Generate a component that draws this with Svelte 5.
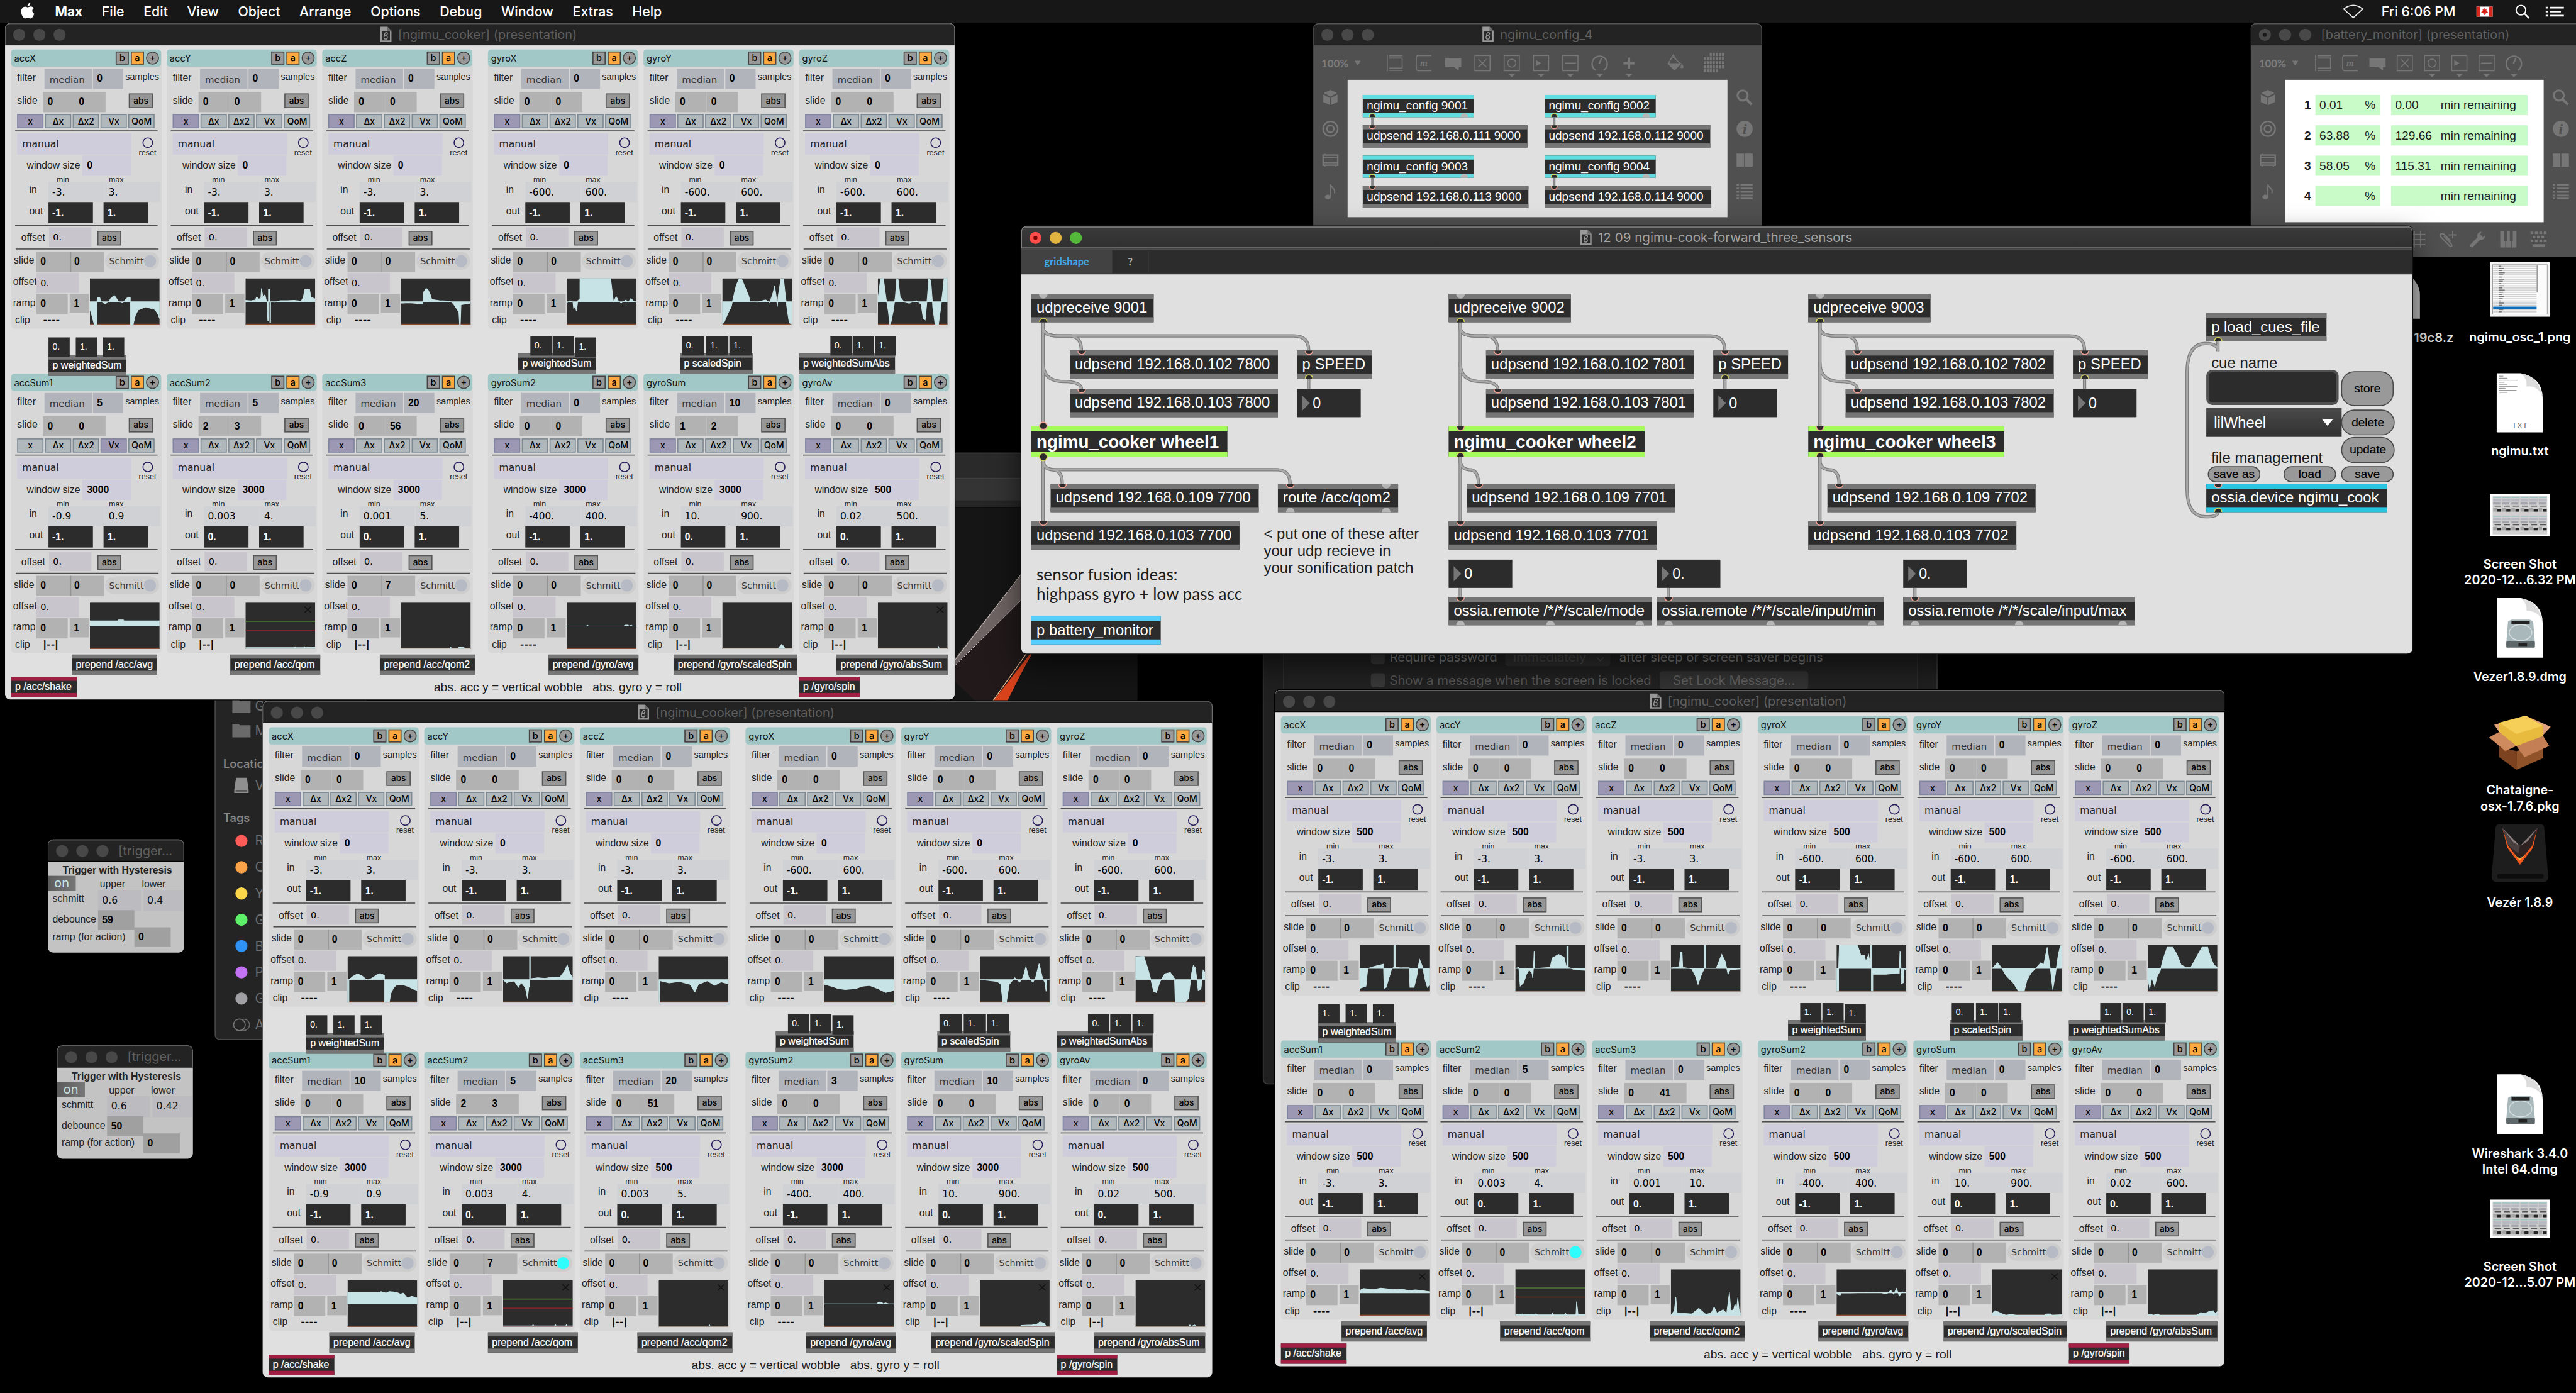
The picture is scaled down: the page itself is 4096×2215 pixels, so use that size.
<script>
  const names = ['accX', 'accY', 'accZ', 'gyroX', 'gyroY', 'gyroZ', 'accSum1', 'accSum2', 'accSum3', 'gyroSum2', 'gyroSum', 'gyroAv'];
  const tabNames = ['x', 'Δx', 'Δx2', 'Vx', 'QoM'];

  // One module per row: filter, slideA, slideB, window size, in min, in max, out min, smoothing, clip, graph
  function build(rows) {
    return rows.map((r, i) => ({
      name: names[i], filter: r[0], sa: r[1], sb: r[2], win: r[3], lo: r[4], hi: r[5], out: r[6], s2: r[7], clip: r[8],
      graph: r[9], uni: !!r[10]?.uni, thr: !!r[10]?.thr, mark: !!r[10]?.mark, lit: !!r[10]?.lit, tab: r[10]?.tab ?? 0
    }));
  }

  const C = '----', B = '|--|';
  const flatLine = '0,0 28,0 30,3 31,0 82,0 84,4 88,4 89,0 93,3 94,0 100,0';

  const cookers = [
    {
      x: 10, y: 46, sums: [['0.', '1.', '1.'], ['0.', '1.', '1.'], ['0.', '1.', '1.'], ['0.', '1.', '1.']],
      mods: build([
        [0, 0, 0, 0, '-3.', '3.', '-1.', 0, C, '0,-30 3,-60 6,-95 10,-97 10,0 11,20 14,20 16,0 22,-8 27,0 30,15 35,27 38,15 41,0 47,-5 51,10 55,20 58,18 58,-97 62,-97 65,-60 69,-35 75,-28 80,-22 87,-28 92,-30 95,-40 98,-55 100,-72'],
        [0, 0, 0, 0, '-3.', '3.', '-1.', 0, C, '0,6 8,4 14,8 16,20 19,12 22,15 23,57 25,20 28,30 30,5 31,0 32,-80 33,-80 33,52 35,52 35,-87 36,-87 36,0 42,-2 50,5 60,5 70,6 80,3 83,20 85,52 92,52 94,20 100,12'],
        [0, 0, 0, 0, '-3.', '3.', '-1.', 0, C, '0,-6 10,-4 20,-6 31,-10 32,40 36,57 39,50 42,30 44,10 55,5 70,3 75,-8 80,-30 83,-45 84,-97 85,-97 86,-12 92,-10 98,-8 100,0'],
        [0, 0, 0, 0, '-600.', '600.', '-1.', 0, C, '0,-5 5,5 9,-3 10,-30 12,-15 14,-40 16,5 19,12 19,100 63,100 65,50 67,0 71,22 74,5 78,-6 85,8 88,-4 92,14 97,0 100,-3'],
        [0, 0, 0, 0, '-600.', '600.', '-1.', 0, C, '0,-95 3,-85 8,-50 13,-20 16,20 20,70 24,97 28,97 33,60 38,25 40,0 50,-2 62,8 68,-4 73,40 75,68 77,30 79,-20 80,20 84,97 88,97 90,40 93,-30 96,-90 100,-95'],
        [0, 0, 0, 0, '-600.', '600.', '-1.', 0, C, '0,10 4,100 8,100 12,10 15,-40 17,-97 19,-85 22,-40 25,20 27,97 29,97 32,20 38,-2 45,-6 55,5 62,-10 65,-70 68,-77 71,20 73,100 76,90 79,-30 82,-95 87,-95 90,-30 93,40 95,100 100,100'],
        [5, 0, 0, 3000, '-0.9', '0.9', '-1.', 0, B, '0,22 40,22 41,26 48,26 49,22 100,22', { tab: 3 }],
        [5, 2, 3, 3000, '0.003', '4.', '0.', 0, B, '0,2 70,2 71,4 72,2 84,2 85,4 86,2 100,3', { uni: true, thr: true, mark: true }],
        [20, 0, 56, 3000, '0.001', '5.', '0.', 7, B, '0,0 70,0 71,3 73,0 82,0 83,3 90,3 91,0 100,0', { uni: true }],
        [0, 0, 0, 3000, '-400.', '400.', '-1.', 0, C, flatLine],
        [10, 1, 2, 3000, '10.', '900.', '0.', 0, B, '0,0 80,0 82,4 85,9 88,5 90,0 100,0', { uni: true }],
        [0, 0, 0, 500, '0.02', '500.', '0.', 0, B, '0,0 86,0 87,4 88,0 100,0', { uni: true, mark: true }]
      ])
    },
    {
      x: 520, y: 1388, sums: [['0.', '1.', '1.'], ['0.', '1.', '1.'], ['0.', '1.', '1.'], ['0.', '1.', '1.']],
      mods: build([
        [0, 0, 0, 0, '-3.', '3.', '-1.', 0, C, '0,-97 2,-97 2,0 8,14 14,24 20,18 26,3 30,-2 36,8 42,20 47,26 53,18 53,-97 60,-97 62,-60 66,-35 71,-20 80,-22 88,-30 94,-40 100,-46'],
        [0, 0, 0, 0, '-3.', '3.', '-1.', 0, C, '0,0 5,-14 10,-8 16,-6 22,-32 26,-12 32,-35 35,-80 37,-30 38,-30 38,100 39,100 39,4 50,8 60,5 70,10 82,12 88,35 92,62 96,25 100,8'],
        [0, 0, 0, 0, '-3.', '3.', '-1.', 0, C, '0,-97 1,-97 2,-5 15,-14 30,-8 45,-20 52,-52 57,-20 70,-5 80,-25 90,-10 100,-18'],
        [0, 0, 0, 0, '-600.', '600.', '-1.', 0, C, '0,-20 10,-28 20,-38 30,-42 45,-38 55,-28 65,-25 78,-40 88,-55 95,-50 100,-45'],
        [0, 0, 0, 0, '-600.', '600.', '-1.', 0, C, '0,0 10,-3 25,-8 30,-20 33,-97 38,-97 42,-20 50,8 57,-10 62,10 66,55 70,10 76,-12 80,10 85,68 90,5 93,-10 95,-50 96,0 100,0'],
        [0, 0, 0, 0, '-600.', '600.', '-1.', 0, C, '0,97 12,100 18,45 22,0 26,-50 30,-55 35,-10 42,25 50,30 56,5 57,-97 72,-95 76,-80 80,20 83,60 86,50 90,-45 94,-40 97,40 100,30'],
        [10, 0, 0, 3000, '-0.9', '0.9', '-1.', 0, C, '0,48 45,48 48,52 55,46 60,52 70,50 76,42 80,46 86,25 92,32 100,25'],
        [5, 2, 3, 3000, '0.003', '4.', '0.', 7, B, '0,1 42,1 43,4 44,1 74,1 75,4 76,1 90,1 91,4 92,1 100,1', { uni: true, thr: true, mark: true, lit: true }],
        [20, 0, 51, 500, '0.003', '5.', '0.', 0, B, '0,0 72,0 73,3 74,0 100,0', { uni: true, mark: true }],
        [3, 0, 0, 3000, '-400.', '400.', '-1.', 0, C, '0,0 76,0 77,6 83,6 84,0 88,4 92,0 100,0', { mark: true }],
        [10, 0, 0, 3000, '10.', '900.', '0.', 0, B, '0,0 58,0 60,2 75,3 82,5 86,10 92,7 95,0 100,0', { uni: true, mark: true }],
        [0, 0, 0, 500, '0.02', '500.', '0.', 0, B, '0,0 77,0 78,3 80,0 85,3 87,0 100,0', { uni: true, mark: true }]
      ])
    },
    {
      x: 2524, y: 1366, sums: [['1.', '1.', '1.'], ['1.', '1.', '1.'], ['0.', '1.', '1.'], ['1.', '0.', '1.']],
      mods: build([
        [0, 0, 0, 500, '-3.', '3.', '-1.', 0, C, '0,-85 9,-75 11,-15 12,0 20,8 34,18 35,-85 38,-80 42,-40 46,0 49,5 49,100 51,100 51,5 60,3 71,3 72,-80 78,-80 82,-30 84,10 86,38 90,8 94,-50 97,-80 100,-70'],
        [0, 0, 0, 500, '-3.', '3.', '-1.', 0, C, '0,0 5,5 7,-75 12,-60 16,-25 20,-5 24,-20 25,-40 26,0 27,75 28,0 50,5 53,45 62,60 70,48 73,10 74,0 74,95 76,95 76,5 85,-5 100,-8'],
        [0, 0, 0, 500, '-3.', '3.', '-1.', 0, C, '0,2 12,8 14,70 16,70 17,5 30,-2 35,-30 39,-68 44,-25 48,0 48,100 50,100 50,0 65,0 73,60 78,30 82,-25 85,-5 100,-2'],
        [0, 0, 0, 500, '-600.', '600.', '-1.', 0, C, '0,-97 3,-97 3,0 4,100 30,100 35,55 40,55 42,30 46,60 49,5 49,100 50,100 50,-97 52,-97 52,-25 70,-25 90,-20 91,75 92,60 93,-65 96,-60 97,0 100,-10'],
        [0, 0, 0, 500, '-600.', '600.', '-1.', 0, C, '0,0 8,25 14,0 20,-30 30,-60 38,-97 46,-97 50,-50 56,-18 64,5 70,25 74,15 79,90 84,-10 87,-90 91,-20 95,60 98,97 100,97'],
        [0, 0, 0, 500, '-600.', '600.', '-1.', 0, C, '0,-40 3,-85 6,-40 10,-75 14,-30 18,-10 22,40 28,90 36,90 42,60 48,15 55,5 62,5 70,50 78,90 86,90 90,50 95,15 100,5'],
        [0, 0, 0, 500, '-3.', '3.', '-1.', 0, C, '0,10 5,18 20,14 30,20 50,14 60,16 70,10 80,12 90,9 100,4', { mark: true }],
        [5, 0, 0, 500, '0.003', '4.', '0.', 0, B, '0,1 10,3 12,1 30,3 32,1 52,1 53,5 55,1 70,1 72,4 74,1 87,1 88,30 90,2 100,2', { uni: true, thr: true, lit: true }],
        [0, 0, 41, 500, '0.001', '10.', '0.', 0, B, '0,0 5,10 7,40 9,5 30,3 36,10 40,15 50,2 58,5 62,18 66,5 75,12 80,4 84,50 86,10 90,12 92,25 94,10 96,38 98,10 100,5', { uni: true }],
        [0, 0, 0, 500, '-400.', '400.', '-1.', 0, C, '0,-4 5,-10 7,0 20,-1 60,2 72,-4 78,10 82,-6 86,18 90,-14 94,4 100,0'],
        [0, 0, 0, 500, '10.', '900.', '0.', 0, B, '0,4 4,10 9,7 15,3 20,0 28,2 34,0 75,0 78,3 84,3 86,0 100,1', { uni: true, mark: true }],
        [0, 0, 0, 500, '0.02', '600.', '0.', 0, B, '0,0 4,3 8,0 14,3 18,0 70,0 76,6 82,4 88,8 94,10 97,4 100,8', { uni: true }]
      ])
    }
  ];

  const sumNames = ['p weightedSum', 'p weightedSum', 'p scaledSpin', 'p weightedSumAbs'];
  const sumPos = [
    { x: 86, y: 658, w: 154, n: [[86, 622, 42], [140, 622, 42], [194, 622, 42]] },
    { x: 1016, y: 654, w: 154, n: [[1040, 620, 42], [1084, 620, 42], [1128, 622, 42]] },
    { x: 1336, y: 654, w: 144, n: [[1340, 620, 44], [1388, 620, 44], [1434, 620, 44]] },
    { x: 1572, y: 654, w: 190, n: [[1634, 620, 42], [1678, 620, 42], [1722, 620, 42]] }
  ];
  const prepends = [
    [132, 169, 'prepend /acc/avg'], [446, 178, 'prepend /acc/qom'], [742, 188, 'prepend /acc/qom2'],
    [1076, 178, 'prepend /gyro/avg'], [1324, 244, 'prepend /gyro/scaledSpin'], [1646, 220, 'prepend /gyro/absSum']
  ];

  function points(m) {
    const base = m.uni ? 91 : 46.5;
    const span = m.uni ? 0.91 : 0.465;
    const pts = m.graph.split(' ').map((p) => {
      const [x, v] = p.split(',').map(Number);
      return `${(x * 1.38).toFixed(1)},${(base - v * span).toFixed(1)}`;
    });
    return `0,${base} ${pts.join(' ')} 138,${base}`;
  }

  // Main patcher
  const I = 'in', O = 'out', F = 'free';
  const objects = [];
  const numbers = [];
  const cables = [];
  [[20, 76, 38, '1', '00'], [846, 74, 36, '2', '01'], [1558, 74, 38, '3', '02']].forEach(([x, d, e, n, p]) => {
    const c = x + 23;
    objects.push(
      { x, y: 134, w: 242, t: `udpreceive 900${n}`, p: [[F, 23, 0], [O, 23, 1]] },
      { x: x + d, y: 246, w: 412, t: `udpsend 192.168.0.102 78${p}`, p: [[I, 23, 0]] },
      { x: x + d, y: 322, w: 412, t: `udpsend 192.168.0.103 78${p}`, p: [[I, 23, 0]] },
      { x: x + d + 450, y: 246, w: 148, t: 'p SPEED', p: [[I, 23, 0], [O, 23, 1]] },
      { x, y: 396, w: 388, h: 60, t: `ngimu_cooker wheel${n}`, c: n === '1' ? 'lime hover' : 'lime', p: [[I, 23, 0], [O, 23, 1]] },
      { x: x + e, y: 510, w: 412, t: `udpsend 192.168.0.109 77${p}`, p: [[I, 23, 0]] },
      { x, y: 584, w: 412, t: `udpsend 192.168.0.103 77${p}`, p: [[I, 23, 0]] }
    );
    numbers.push({ x: x + d + 450, y: 322, t: '0' });
    cables.push(
      `M${c} 190V396`, `M${c} 456V584`,
      `M${c} 190V200Q${c} 217 ${c + 30} 217H${c + d - 22}Q${c + d} 219 ${c + d} 246`,
      `M${c} 190V200Q${c} 217 ${c + 30} 217H${c + d + 420}Q${c + d + 450} 217 ${c + d + 450} 246`,
      `M${c} 270Q${c} 304 ${c + 34} 307Q${c + d} 307 ${c + d} 322`,
      `M${c + d + 450} 302V322`,
      `M${c} 456V464Q${c} 480 ${c + 18} 482Q${c + e} 482 ${c + e} 510`
    );
  });
  cables.push(
    'M43 456V464Q43 482 68 482H505Q532 482 532 510',
    'M869 716V734', 'M1281 716V734', 'M1769 716V734',
    'M2369 228V247',
    'M2369 566Q2369 575 2345 575Q2308 575 2308 520V290Q2308 232 2345 232Q2369 232 2369 247'
  );
  objects.push(
    { x: 508, y: 510, w: 238, t: 'route /acc/qom2', p: [[I, 24, 0], [F, 214, 0], [F, 24, 1], [F, 214, 1]] },
    { x: 20, y: 772, w: 256, t: 'p battery_monitor', c: 'sky', p: [] },
    { x: 846, y: 734, w: 402, t: 'ossia.remote /*/*/scale/mode', p: [[I, 23, 0], [F, 23, 1], [F, 201, 1], [F, 378, 1]] },
    { x: 1258, y: 734, w: 450, t: 'ossia.remote /*/*/scale/input/min', p: [[I, 23, 0], [F, 23, 1], [F, 225, 1], [F, 426, 1]] },
    { x: 1746, y: 734, w: 458, t: 'ossia.remote /*/*/scale/input/max', p: [[I, 23, 0], [F, 23, 1], [F, 229, 1], [F, 434, 1]] },
    { x: 2346, y: 172, w: 238, t: 'p load_cues_file', p: [[O, 23, 1]] },
    { x: 2346, y: 510, w: 358, t: 'ossia.device ngimu_cook', c: 'aqua', p: [[I, 23, 0], [O, 23, 1]] }
  );
  numbers.push({ x: 846, y: 660, t: '0' }, { x: 1258, y: 660, t: '0.' }, { x: 1746, y: 660, t: '0.' });
  const pills = [
    [2613, 287, 104, 69, 'store'], [2613, 363, 106, 51, 'delete'], [2613, 417, 106, 52, 'update'],
    [2349, 475, 104, 32, 'save as'], [2499, 475, 104, 32, 'load'], [2613, 475, 104, 32, 'save']
  ];

  const configs = [[30, 30, 1, 326], [390, 30, 2, 328], [30, 150, 3, 328], [390, 150, 4, 330]];
  const battery = [[1, '0.01', '0.00'], [2, '63.88', '129.66'], [3, '58.05', '115.31'], [4, '', '']];
  const menus = ['File', 'Edit', 'View', 'Object', 'Arrange', 'Options', 'Debug', 'Window', 'Extras', 'Help'];
  const tags = [['#ff5b58', 'R'], ['#fba349', 'C'], ['#fbd648', 'Y'], ['#5cf169', 'G'], ['#2f93f6', 'B'], ['#c573f5', 'P'], ['#a0a0a5', 'G']];
  const triggers = [{ x: 95, y: 1662, lo: '0.4', deb: '59' }, { x: 113, y: 2070, lo: '0.42', deb: '50' }];

  const desktop = [
    { y: 519, kind: 'list', h: 108, ty: 24, t: ['ngimu_osc_1.png'] },
    { y: 739, kind: 'txt', h: 117, ty: 20, t: ['ngimu.txt'] },
    { y: 978, kind: 'shot', h: 84, ty: 38, t: ['Screen Shot', '2020-12...6.32 PM'] },
    { y: 1184, kind: 'dmg', h: 118, ty: 22, t: ['Vezer1.8.9.dmg'] },
    { y: 1417, kind: 'box', h: 108, ty: 23, t: ['Chataigne-', 'osx-1.7.6.pkg'] },
    { y: 1632, kind: 'vezer', h: 114, ty: 25, t: ['Vezér 1.8.9'] },
    { y: 2127, kind: 'dmg', h: 119, ty: 21, t: ['Wireshark 3.4.0', 'Intel 64.dmg'] },
    { y: 2375, kind: 'shot', h: 76, ty: 40, t: ['Screen Shot', '2020-12...5.07 PM'] }
  ];
</script>

{#snippet lights(dot)}
  <span class="lights"><i class:dot></i><i></i><i></i></span>
{/snippet}

{#snippet docIcon()}
  <svg class="doc" viewBox="0 0 22 30"><path d="M0 0H14L22 8V30H0Z" fill="#9a9a9a" /><path d="M14 0L22 8H14Z" fill="#6a6a6a" /><rect x="3" y="9" width="16" height="18" fill="#2a2a2a" /><circle cx="10.5" cy="21" r="3.4" fill="none" stroke="#9a9a9a" stroke-width="1.7" /><path d="M8 18C8 13 10 11 13 11.500C15 12 14.500 15 12 15.500" fill="none" stroke="#9a9a9a" stroke-width="1.7" /></svg>
{/snippet}

{#snippet toolIcon(k)}
  <svg class="ico" viewBox="0 0 32 32" fill="none" stroke="#767676" stroke-width="2">
    {#if k === 'obj'}<path d="M1.500 0V32M5 1.500H32M5 6H32M5 26H32M5 30.500H32M31 6V26" />
    {:else if k === 'msg'}<path d="M31 1H5Q1 1 1 6V26Q1 31 5 31H31" /><text x="16" y="22" text-anchor="middle" class="mm">m</text>
    {:else if k === 'com'}<path d="M0 6H32V24H27V31L18 24H0Z" fill="#767676" stroke="none" />
    {:else if k === 'tog'}<rect x="1" y="1" width="30" height="30" /><path d="M8 8L24 24M24 8L8 24" />
    {:else if k === 'bang'}<rect x="1" y="1" width="30" height="30" /><circle cx="16" cy="16" r="8" />
    {:else if k === 'num'}<rect x="1" y="1" width="30" height="30" /><path d="M6 10L16 16L6 22Z" fill="#767676" stroke="none" />
    {:else if k === 'sli'}<rect x="1" y="1" width="30" height="30" /><path d="M5 16H27" />
    {:else if k === 'dial'}<path d="M8 30A15 15 0 1 1 24 30" stroke-width="3" /><path d="M15 17L20 6" stroke-width="3" />
    {:else if k === 'plus'}<path d="M16 5V27M5 16H27" stroke-width="5" />
    {:else if k === 'fill'}<path d="M10 3L26 17L14 29L2 17Z" /><path d="M2 17H26L14 29Z" fill="#767676" /><path d="M7 8L12 0L17 8" /><path d="M29 17Q35 26 29 26Q23 26 29 17Z" fill="#767676" stroke="none" />
    {:else if k === 'grid'}{#each [0, 1, 2, 3, 4] as r}<path d="M{r === 0 ? 8 : -4} {r * 8 - 1}H{r === 4 ? 26 : 36}" stroke-width="6" stroke-dasharray="4 2" />{/each}
    {:else if k === 'cube'}<path d="M16 1L29 7L16 14L3 7Z M2 10L15 17V31L2 25Z M30 10L17 17V31L30 25Z" fill="#767676" stroke="none" />
    {:else if k === 'ring'}<circle cx="16" cy="16" r="14.500" stroke-width="3" /><circle cx="16" cy="16" r="7" stroke-width="3" />
    {:else if k === 'amp'}<rect x="1.500" y="6" width="29" height="20" stroke-width="3" /><path d="M2 11H30M2 21H30M5 26V29M27 26V29M5 6V3" />
    {:else if k === 'note'}<path d="M16 2V26M16 2C17 10 27 9 24 20" stroke-width="2.500" /><ellipse cx="11" cy="27" rx="6" ry="4.500" fill="#767676" stroke="none" />
    {:else if k === 'find'}<circle cx="12" cy="12" r="10" stroke-width="4" /><path d="M19 19L30 30" stroke-width="5" />
    {:else if k === 'info'}<circle cx="16" cy="16" r="16" fill="#767676" stroke="none" /><text x="16" y="26" text-anchor="middle" class="ii">i</text>
    {:else if k === 'book'}<path d="M0 3H15V29H0ZM17 3H32V29H17Z" fill="#767676" stroke="none" />
    {:else if k === 'list'}<path d="M0 3H5M8 3H32M0 10H5M8 10H32M0 17H5M8 17H32M0 24H5M8 24H32M0 30H5M8 30H32" stroke-width="3.500" />
    {:else if k === 'hash'}<path d="M10 0V32M22 0V32M0 6H32M0 16H32M0 26H32" />
    {:else if k === 'clip'}<path d="M8 9L23 25Q26 30 21 30L3 12Q-1 6 4 5Q8 4 11 8L22 20M26 0V14M18 7H33" stroke-width="2.500" />
    {:else if k === 'wrench'}<path d="M4 28L21 11" stroke-width="7" stroke-linecap="round" /><path d="M30 8A8 8 0 1 1 23 1L20 7L25 12Z" fill="#767676" stroke="none" />
    {:else if k === 'piano'}<path d="M0 0H7V20H10V32H0ZM13 0H19V20H22V32H11V20H13ZM25 0H32V32H23V20H25Z" fill="#767676" stroke="none" />
    {:else if k === 'keys'}<path d="M0 3H32M4 11H29M0 19H32" stroke-width="5" stroke-dasharray="5.500 3.200" /><path d="M4 28H29" stroke-width="5" />{/if}
  </svg>
{/snippet}

{#snippet module(m)}
  <section class="mod">
    <header><b>{m.name}</b><span class="sq">b</span><span class="sq on">a</span><span class="sq round">+</span></header>
    <div class="row r-filter">
      <label>filter</label><span class="cell lilac dv">median</span><span class="cell lilac num">{m.filter}</span><label class="samples">samples</label>
    </div>
    <div class="row r-slide">
      <label>slide</label><span class="cell grey num">{m.sa}</span><span class="cell grey num">{m.sb}</span><span class="abs">abs</span>
    </div>
    <div class="row tabs">
      {#each tabNames as t, i}<span class:sel={i === m.tab}>{t}</span>{/each}
    </div>
    <hr />
    <div class="row r-manual">
      <span class="cell pale dv">manual</span><div class="reset"><i></i><label>reset</label></div>
    </div>
    <div class="row r-win"><label>window size</label><span class="cell pale num">{m.win}</span></div>
    <div class="row r-mm"><label>min</label><label>max</label></div>
    <div class="row r-in"><label>in</label><span class="cell dv">{m.lo}</span><span class="cell dv">{m.hi}</span></div>
    <div class="row r-out"><label>out</label><span class="cell num">{m.out}</span><span class="cell num">1.</span></div>
    <hr class="h2" />
    <div class="row r-off"><label>offset</label><span class="cell mauve">0.</span><span class="abs">abs</span></div>
    <hr class="h3" />
    <div class="row r-sl2">
      <label>slide</label><span class="cell grey num">0</span><span class="cell grey num">{m.s2}</span>
      <span class="schmitt">Schmitt<i class:lit={m.lit}></i></span>
    </div>
    <div class="foot">
      <div class="left">
        <div class="row"><label>offset</label><span class="cell mauve">0.</span></div>
        <div class="row r-ramp"><label>ramp</label><span class="cell grey num">0</span><span class="cell grey num one">1</span></div>
        <div class="row r-clip"><label>clip</label><span>{m.clip}</span></div>
      </div>
      <svg class="graph" viewBox="0 0 138 92">
        <rect width="138" height="92" fill="#2c2c2c" />
        <rect y="90" width="138" height="2" fill="#8d4f33" />
        <polygon points={points(m)} fill="#c8e3e6" stroke="#c8e3e6" stroke-width="1.3" />
        {#if m.thr}<path d="M0 37H138" stroke="#4c7a33" stroke-width="2" /><path d="M0 55H138" stroke="#7c2424" stroke-width="2" />{/if}
        {#if m.mark}<path d="M117 8L130 20M130 8L117 20" stroke="#111" stroke-width="1.800" />{/if}
      </svg>
    </div>
  </section>
{/snippet}

{#snippet patchObj(o)}
  <div class="obj {o.c ?? ''}" style="left:{o.x}px;top:{o.y}px;width:{o.w}px;height:{o.h ?? 56}px">
    {o.t}
    {#each o.p ?? [] as q}<i class="port {q[0]}" class:low={q[2] === 1} style="left:{q[1] - 8}px"></i>{/each}
  </div>
{/snippet}

{#snippet drive()}
  <path d="M26 44L34 40H76L84 44L88 88Q88 92 84 92H26Q22 92 22 88Z" fill="#a9b8bb" /><rect x="22" y="84" width="66" height="12" rx="2" fill="#5e686b" /><ellipse cx="55" cy="66" rx="26" ry="16" fill="none" stroke="#d5dfe1" stroke-width="2" /><rect x="34" y="43" width="42" height="6" fill="#222" /><rect x="50" y="87" width="20" height="6" fill="#222" />
{/snippet}

<div class="screen">
  <!-- background windows -->
  <div class="vz">
    <div class="vz-a"></div><div class="vz-b"></div><div class="vz-c"></div>
    <svg viewBox="1850 880 402 530">
      <path d="M2060 1087L2060 1150L1850 1362V1356Z" fill="#6e6463" />
      <path d="M2060 1150V1260L2038 1295L1968 1400H1943L1850 1310V1357Z" fill="#221a1a" />
      <path d="M2052 1278L2022 1333L1988 1400H1957Z" fill="#d8431c" />
      <path d="M2060 1150L1850 1358M2060 1087L1850 1360" stroke="#d8d0cc" stroke-width="1.200" />
      <path d="M2040 1283L1957 1400" stroke="#f4c9a0" stroke-width="1.500" />
    </svg>
  </div>

  <aside class="finder">
    <div class="fi"><svg viewBox="0 0 36 30"><path d="M0 2H12L15 5H36V29H0Z" fill="#6a6a6a" /></svg>G</div>
    <div class="fi"><svg viewBox="0 0 36 30"><path d="M0 2H12L15 5H36V29H0Z" fill="#6a6a6a" /></svg>M</div>
    <h4>Locations</h4>
    <div class="fi"><svg viewBox="0 0 36 36"><path d="M6 1H30L34 28V35H2V28Z" fill="#8f8f8f" /><path d="M5 30H31" stroke="#333" stroke-width="3" /></svg>V</div>
    <h4 class="tg">Tags</h4>
    {#each tags as [c, t]}<div class="fi"><i style="background:{c}"></i>{t}</div>{/each}
    <div class="fi"><svg viewBox="0 0 36 30"><circle cx="23" cy="15" r="11" fill="none" stroke="#666" stroke-width="2" /><circle cx="14" cy="15" r="11.500" fill="#252525" stroke="#777" stroke-width="2" /></svg>A</div>
  </aside>

  <div class="prefs">
    <div class="panel">
      <div class="pl"><i></i><span class="w1">Require password</span><em>immediately<u>⌄</u></em><span>after sleep or screen saver begins</span></div>
      <div class="pl dim"><i></i><span class="w2">Show a message when the screen is locked</span><em class="btn">Set Lock Message...</em></div>
    </div>
  </div>

  <!-- desktop files -->
  <div class="zfile"><svg viewBox="0 0 90 90"><path d="M0 0H66Q88 20 88 40V88H0Z" fill="#b9b9b9" /></svg><span>19c8.z</span></div>
  {#each desktop as d}
    <figure class="file" style="top:{d.y}px">
      <svg viewBox="0 0 122 {d.h}" style="height:{d.h}px">
        {#if d.kind === 'list'}
          <rect x="2" width="118" height="108" fill="#f4f4f4" /><rect x="7" y="5" width="108" height="98" fill="#fbfbfb" stroke="#888" />
          {#each Array(22) as _, i}<rect x="8" y={7 + i * 4.3} width="86" height="2.200" fill="#d2d2d2" /><rect x="19" y={7 + i * 4.3} width={5 + ((i * 5) % 8)} height="2" fill="#777" />{/each}
          <rect x="8" y="88" width="86" height="5" fill="#0a6cbd" /><rect x="94" y="6" width="2" height="54" fill="#999" />
        {:else if d.kind === 'txt'}
          <path d="M15 0H62Q106 8 106 50V117H15Z" fill="#fff" /><path d="M62 0Q76 10 74 26Q100 24 106 50Q100 6 62 0Z" fill="#dcdcdc" />
          {#each Array(9) as _, i}<rect x="20" y={5 + i * 4} width={[8, 16, 36, 10, 16, 36, 12, 34, 16][i]} height="1.600" fill="#999" />{/each}
          <text x="61" y="109" text-anchor="middle" class="txt">TXT</text>
        {:else if d.kind === 'shot'}
          <rect x="2" width="118" height={d.h} fill="#fff" /><rect x="7" y="4" width="108" height={d.h - 8} fill="#cfcfcf" />
          {#each [0, 1, 2, 3, 4, 5] as c}{#each [0, 1] as r}
            <g transform="translate({8 + c * 18} {6 + r * (d.h / 2 - 5)})"><rect width="16" height="2" fill="#9cc3c1" /><rect y="4" width="16" height="5" fill="#b9b9c4" /><rect y="11" width="14" height="4" fill="#a2a2aa" /><rect x="3" y="17" width="12" height="2" fill="#555" /><rect y="22" width="7" height="7" fill="#a5a5a5" /><rect x="8" y="24" width="8" height="5" fill="#222" /></g>
          {/each}{/each}
        {:else if d.kind === 'dmg'}
          <path d="M16 0H62Q106 8 106 50V118H16Z" fill="#fff" /><path d="M62 0Q76 10 74 26Q100 24 106 50Q100 6 62 0Z" fill="#dcdcdc" />
          <g transform="translate(15 3) scale(0.86 0.99)">{@render drive()}</g>
        {:else if d.kind === 'box'}
          <path d="M20 60L54 92V107L20 80Z" fill="#8a4a24" /><path d="M20 62L54 70V107L20 82Z" fill="#7d4220" /><path d="M54 70L107 56V84L54 107Z" fill="#8f5229" />
          <path d="M10 18L60 4L72 0L122 22L107 38L54 60L20 32Z" fill="#e0a27a" /><path d="M20 14L60 4L72 0L106 20V44L54 60L20 34Z" fill="#e8bb3e" /><path d="M20 14L72 0L106 20L54 36Z" fill="#f6cf58" />
          <path d="M0 43L20 32L54 60L32 70Z" fill="#cf8a5e" /><path d="M54 60L107 40L119 60L70 82Z" fill="#c57f55" />
        {:else}
          <path d="M20 0H102Q108 0 109 6L117 104Q117 114 108 114H14Q5 114 5 104L13 6Q14 0 20 0Z" fill="#1d1d1d" /><rect x="16" y="98" width="92" height="9" rx="4" fill="#0d0d0d" />
          <path d="M25 6L61 43L97 6L85 44L61 78L38 44Z" fill="#2e2222" /><path d="M25 6L61 43L48 36Z" fill="#8d8080" /><path d="M25 6L48 36L61 43L58 58L38 42Z" fill="#4b4040" /><path d="M97 6L61 43L76 34Z" fill="#857a7a" />
          <path d="M27 10L38 43L61 72L85 43L95 10L87 46L61 80L36 46Z" fill="#f5581e" /><path d="M50 60L61 72L72 60L61 68Z" fill="#ffb040" />
        {/if}
      </svg>
      <figcaption style="margin-top:{d.ty}px">{#each d.t as l}<span>{l}</span>{/each}</figcaption>
    </figure>
  {/each}

  <!-- menu bar -->
  <nav class="menubar">
    <svg class="apple" viewBox="0 0 26 32"><path d="M18 0C18.500 4 15.500 7.500 12.500 7.500C12 4 15 .7 18 0ZM13 9.500C14.500 9.500 16 7.900 19 7.900C21.500 7.900 23.800 9.200 25 11.300C20.500 13.800 21.200 20.300 25.900 22.200C24.500 26 21.800 31.500 18.700 31.600C16.500 31.600 16 30.300 13.300 30.300C10.600 30.300 9.900 31.500 7.900 31.600C4.500 31.800 0 24.500 0 18C0 11.500 4 8 7.700 8C10 8 11.500 9.500 13 9.500Z" fill="#fff" /></svg>
    <strong>Max</strong>
    {#each menus as m}<span>{m}</span>{/each}
    <div class="status">
      <svg class="wifi" viewBox="0 0 42 28"><path d="M2 9Q21 -6 40 9L21 26Z" fill="none" stroke="#eee" stroke-width="2.200" stroke-linejoin="round" /></svg>
      <span>Fri 6:06 PM</span>
      <svg class="flag" viewBox="0 0 32 20"><rect width="32" height="20" fill="#fff" /><rect width="7" height="20" fill="#d8281e" /><rect x="25" width="7" height="20" fill="#d8281e" /><path d="M16 3L18 6L20 5L19.500 9L22 8L21.500 10L23 11L18 14H16.500V17H15.500V14H14L9 11L10.500 10L10 8L12.500 9L12 5L14 6Z" fill="#d8281e" /></svg>
      <svg class="mag" viewBox="0 0 28 28"><circle cx="11" cy="11" r="9.500" fill="none" stroke="#fff" stroke-width="2.600" /><path d="M18 18L27 27" stroke="#fff" stroke-width="3" /></svg>
      <svg class="burger" viewBox="0 0 36 20"><path d="M0 2H4M8 2H36M0 10H4M8 10H30M0 18H4M8 18H36" stroke="#fff" stroke-width="3.400" /></svg>
    </div>
  </nav>

  <!-- config patcher -->
  <div class="win config">
    <div class="bar">{@render lights(false)}<span class="title">{@render docIcon()}ngimu_config_4</span></div>
    <div class="tools"><b>100%</b><i class="tri"></i>
      {#each ['obj', 'msg', 'com', 'tog', 'bang', 'num', 'sli', 'dial', 'plus'] as k, i}<span class="tool" class:drop={i > 3}>{@render toolIcon(k)}</span>{/each}
      <span class="tool gap">{@render toolIcon('fill')}</span><span class="tool gap2">{@render toolIcon('grid')}</span>
    </div>
    <div class="mid">
      <div class="side">{#each ['cube', 'ring', 'amp', 'note'] as k}{@render toolIcon(k)}{/each}</div>
      <div class="canvas">
        <svg class="wires"><path d="M49 74V90M409 74V90M49 194V210M409 194V210" /></svg>
        {#each configs as [x, y, n, w]}
          <div class="obj s cy" style="left:{x}px;top:{y}px;width:220px">ngimu_config 900{n}<i class="port out low" style="left:12px"></i><i class="port free low" style="left:194px"></i></div>
          <div class="obj s" style="left:{x}px;top:{y + 60}px;width:{w}px">udpsend 192.168.0.11{n} 9000<i class="port in" style="left:12px"></i></div>
        {/each}
      </div>
      <div class="side">{#each ['find', 'info', 'book', 'list'] as k}{@render toolIcon(k)}{/each}</div>
    </div>
  </div>

  <!-- battery monitor -->
  <div class="win batt">
    <div class="bar">{@render lights(true)}<span class="title">[battery_monitor] (presentation)</span></div>
    <div class="tools"><b>100%</b><i class="tri"></i>
      {#each ['obj', 'msg', 'com', 'tog', 'bang', 'num', 'sli', 'dial'] as k, i}<span class="tool" class:drop={i > 3}>{@render toolIcon(k)}</span>{/each}
    </div>
    <div class="mid">
      <div class="side">{#each ['cube', 'ring', 'amp', 'note'] as k}{@render toolIcon(k)}{/each}</div>
      <div class="levels">
        {#each battery as [n, p, r]}
          <div class="level"><b>{n}</b><span class="pc"><span>{p}</span>%</span><span class="rem"><span>{r}</span>min remaining</span></div>
        {/each}
      </div>
      <div class="side">{#each ['find', 'info', 'book', 'list'] as k}{@render toolIcon(k)}{/each}</div>
    </div>
    <div class="dock">{#each ['hash', 'clip', 'wrench', 'piano', 'keys'] as k}{@render toolIcon(k)}{/each}</div>
  </div>

  <!-- cooker windows -->
  {#each cookers as c}
    <div class="win cooker" style="left:{c.x}px;top:{c.y}px">
      <div class="bar">{@render lights(false)}<span class="title">{@render docIcon()}[ngimu_cooker] (presentation)</span></div>
      <div class="body">
        <div class="mods">{#each c.mods as m}{@render module(m)}{/each}</div>
      </div>
      {#each sumPos as s, i}
        <div class="obj xs" style="left:{s.x}px;top:{s.y}px;width:{s.w}px">{sumNames[i]}</div>
        {#each s.n as [x, y, w], j}<span class="mini" style="left:{x}px;top:{y}px;width:{w}px">{c.sums[i][j]}</span>{/each}
      {/each}
      {#each prepends as [x, w, t]}<div class="obj xs low" style="left:{x}px;width:{w}px">{t}</div>{/each}
      <div class="obj xs red shake">p /acc/shake</div>
      <div class="obj xs red spin">p /gyro/spin</div>
      <p class="note">abs. acc y = vertical wobble &nbsp; abs. gyro y = roll</p>
    </div>
  {/each}

  <!-- trigger windows -->
  {#each triggers as t}
    <div class="win trig" style="left:{t.x}px;top:{t.y}px">
      <div class="bar">{@render lights(false)}<span class="title">[trigger...</span></div>
      <div class="tb">
        <strong>Trigger with Hysteresis</strong>
        <div class="tr t1"><em>on</em><span>upper</span><span>lower</span></div>
        <div class="tr t2"><label>schmitt</label><span class="v">0.6</span><span class="v v2">{t.lo}</span></div>
        <div class="tr t3"><label>debounce</label><b>{t.deb}</b></div>
        <div class="tr t4"><label>ramp (for action)</label><b>0</b></div>
      </div>
    </div>
  {/each}

  <!-- main patcher -->
  <div class="win main">
    <div class="bar"><span class="lights hot"><i></i><i></i><i></i></span><span class="title">{@render docIcon()}12 09 ngimu-cook-forward_three_sensors</span></div>
    <div class="mtabs"><b>gridshape</b><span>?</span></div>
    <svg class="cables" viewBox="0 0 2754 846">
      {#each cables as d}<path {d} class="o" />{/each}
      {#each cables as d}<path {d} class="i" />{/each}
    </svg>
    {#each objects as o}{@render patchObj(o)}{/each}
    {#each numbers as n}<div class="numbox" style="left:{n.x}px;top:{n.y}px"><i></i>{n.t}</div>{/each}
    <p class="cmt c1">&lt; put one of these after<br />your udp recieve in<br />your sonification patch</p>
    <p class="cmt c2">sensor fusion ideas:<br />highpass gyro + low pass acc</p>
    <p class="cmt c3">cue name</p>
    <div class="entry"></div>
    <div class="umenu">lilWheel<i></i></div>
    <p class="cmt c4">file management</p>
    {#each pills as [x, y, w, h, t]}<span class="pill" style="left:{x}px;top:{y}px;width:{w}px;height:{h}px">{t}</span>{/each}
  </div>
</div>

<style>
  :global(body) { background: #000; overflow: hidden; }
  :global(#app) { width: 4096px; height: 2215px; overflow: hidden; }
  .screen { position: relative; width: 5100px; height: 2758px; background: #000; transform: scale(0.80314); transform-origin: 0 0; overflow: hidden; font-family: "Liberation Sans", Arial, sans-serif; color: #222; }
  .screen * { box-sizing: border-box; }
  p, h4, figure { margin: 0; }
  i, em, u { font-style: normal; text-decoration: none; }
  svg { display: block; flex: none; overflow: visible; }

  .menubar { position: absolute; inset: 0 0 auto 0; height: 45px; background: #171717; display: flex; align-items: center; gap: 38px; padding-left: 42px; color: #fff; font: 500 26.600px/45px Inter, sans-serif; }
  .menubar strong { font-weight: 700; font-size: 26px; margin-left: 3px; }
  .apple { width: 26px; height: 32px; margin-top: -4px; }
  .status { position: absolute; left: 4638px; top: 0; height: 45px; display: flex; align-items: center; }
  .status span { width: 150px; margin-left: 35px; white-space: nowrap; }
  .wifi { width: 42px; height: 28px; }
  .flag { width: 32px; height: 20px; margin-left: 38px; }
  .mag { width: 28px; height: 28px; margin-left: 45px; }
  .burger { width: 36px; height: 20px; margin-left: 32px; }

  .win { position: absolute; border-radius: 10px; overflow: hidden; background: #e0e0e0; box-shadow: 0 0 0 1.5px #000; display: flex; flex-direction: column; }
  .bar { position: relative; flex: none; height: 44px; background: #232323; border: 2px solid #555; border-width: 2px 1px 0; border-bottom: 2px solid #000; border-radius: 10px 10px 0 0; display: flex; align-items: center; justify-content: center; }
  .lights { position: absolute; left: 15px; top: 9px; display: flex; gap: 16px; }
  .lights i { width: 24px; height: 24px; border-radius: 50%; background: #484848; }
  .lights .dot { border: 8px solid #484848; background: #1a1a1a; }
  .title { display: flex; align-items: center; gap: 13px; color: #5f5f5f; font: 400 24.900px/40px Inter, sans-serif; white-space: nowrap; }
  .doc { width: 22px; height: 30px; }

  /* cooker */
  .cooker { width: 1880px; height: 1339px; }
  .cooker .title { margin-left: -5px; }
  .body { padding: 8px 0 0 12px; }
  .mods { display: grid; grid-template-columns: repeat(2, 308px) 328px repeat(3, 308px); grid-auto-rows: 642px; }
  .mod { width: 298px; height: 553px; background: #d7d7d7; border-radius: 8px; display: flex; flex-direction: column; font-size: 19.6px; white-space: nowrap; }
  .mod header { flex: none; height: 34px; margin-right: 1px; background: #a1c8c6; border-radius: 6px; display: flex; align-items: center; padding: 0 4px 0 6px; gap: 4px; }
  .mod header b { flex: 1; font: 400 18.300px/34px Inter, sans-serif; color: #111; }
  .sq { width: 26px; height: 26px; border: 2px solid #444; background: #999; color: #000; font: 500 18px/21px Inter, sans-serif; text-align: center; }
  .sq.on { background: #fea93f; }
  .round { border-radius: 50%; line-height: 22px; }
  .row { display: flex; flex: none; align-items: stretch; }
  .row label { flex: none; }
  .cell { flex: none; padding-left: 8px; color: #000; }
  .num { font-weight: 700; }
  .dv { font-family: "DejaVu Sans", sans-serif; font-size: 18.800px; }
  .lilac { background: #b2b4bb; } .grey { background: #b2b2b2; } .pale { background: #cfccdc; } .mauve { background: #c8c5cd; font-family: "DejaVu Sans", sans-serif; font-size: 18px; }
  .r-filter { margin-top: 4px; height: 40px; line-height: 39px; padding-left: 12px; }
  .r-filter label { width: 54px; line-height: 35px; }
  .r-filter .dv { width: 94px; padding-left: 10px; margin-right: 2px; line-height: 43px; font-size: 18.600px; color: #333; }
  .r-filter .num { width: 60px; }
  .r-filter .samples { margin-left: 4px; font-size: 18px; line-height: 32px; width: auto; }
  .r-slide { margin-top: 6px; height: 40px; line-height: 39px; padding-left: 12px; }
  .r-slide label { width: 51px; line-height: 32px; }
  .r-slide .num { width: 62px; padding-left: 9px; }
  .abs { width: 48px; height: 29px; margin: 3px 0 0 46px; border: 2px solid #555; background: #979797; color: #000; font: 500 17px/25px Inter, sans-serif; text-align: center; }
  .tabs { margin-top: 4px; height: 28px; padding-left: 12px; gap: 3px; }
  .tabs span { width: 52.100px; border: 2px solid #7d8993; background: #b0b8bc; color: #000; font: 500 17.300px/24px Inter, sans-serif; text-align: center; }
  .tabs .sel { background: #9c98b3; border-color: #8086a0; }
  hr { flex: none; height: 2px; border: 0; background: #4e4e4e; margin: 4px 8px 0 8px; }
  .h2 { margin-top: 3px; } .h3 { margin: 3px 6px 0 9px; }
  .r-manual { margin-top: 4px; height: 42px; padding-left: 12px; }
  .r-manual .cell { width: 226px; padding-left: 10px; line-height: 42px; font-size: 19.400px; color: #222; }
  .reset { width: 40px; margin-left: 12px; display: flex; flex-direction: column; align-items: center; }
  .reset i { width: 21px; height: 21px; margin-top: 8px; border: 2.500px solid #251d5c; border-radius: 50%; flex: none; }
  .reset label { font-size: 15.700px; line-height: 18px; }
  .r-win { margin-top: 2px; height: 40px; padding-left: 31px; line-height: 39px; }
  .r-win label { width: 110px; } .r-win .num { width: 96px; padding-left: 9px; }
  .r-mm { height: 12px; line-height: 16px; padding-left: 90px; font-size: 15.500px; }
  .r-mm label { width: 103.500px; }
  .r-in { height: 40px; line-height: 42px; }
  .r-in label, .r-out label { width: 73.500px; padding-left: 36px; }
  .r-in label { line-height: 31px; }
  .r-in .cell { width: 110px; background: #d0d1d4; margin-right: 1.500px; font-size: 19.200px; line-height: 41px; }
  .r-out { height: 42px; line-height: 42px; }
  .r-out label { line-height: 34px; }
  .r-out .cell { width: 88px; background: #2c2c2c; color: #fff; margin-right: 21.500px; }
  .r-off { margin-top: 3px; height: 39px; line-height: 40px; padding-left: 20px; }
  .r-off label { width: 55px; } .r-off .cell { width: 84px; }
  .r-off .abs { width: 47px; margin: 7px 0 0 12px; }
  .r-sl2 { margin-top: 4px; height: 40px; line-height: 39px; }
  .r-sl2 label { width: 50px; padding-left: 5.500px; line-height: 35px; }
  .r-sl2 .num { width: 67px; }
  .r-sl2 .num + .num { border-left: 2px solid #949494; padding-left: 6px; }
  .schmitt { width: 107px; height: 35px; margin: 1px 0 0 2px; border-radius: 18px; background: #cdcdcd; padding: 0 4px 0 8px; display: flex; align-items: center; font: 17.800px/36px "DejaVu Sans", sans-serif; color: #333; }
  .schmitt i { width: 24px; height: 24px; flex: none; border-radius: 50%; background: #b6bac5; }
  .schmitt .lit { background: #2ffcfc; }
  .foot { display: flex; margin-top: 2px; }
  .left { width: 155.500px; flex: none; }
  .left .row { height: 40px; line-height: 39px; }
  .left label { width: 50px; padding-left: 3.700px; line-height: 35px; }
  .left .mauve { width: 84px; }
  .left .r-ramp { margin-top: 2px; }
  .r-ramp .num { width: 62px; } .r-ramp .one { width: 38px; height: 38px; margin-left: 4px; font-weight: 600; }
  .left .r-clip { height: 22px; line-height: 22px; }
  .left .r-clip label { width: 64px; padding-left: 8px; line-height: 23px; }
  .r-clip span { color: #000; font-size: 21px; letter-spacing: 1.300px; -webkit-text-stroke: 0.700px #000; }
  .graph { width: 138px; height: 92px; margin-top: 11px; overflow: hidden; }
  .mini { position: absolute; height: 38px; background: #2c2c2c; color: #fff; font: 17.500px/37px "Liberation Sans", sans-serif; padding-left: 8px; }
  .note { position: absolute; left: 849px; top: 1300px; font-size: 24px; line-height: 30px; white-space: nowrap; color: #1c1c1c; }

  /* patcher objects */
  .obj { position: absolute; background: #2c2c2c; color: #fff; border: 0 solid #767676; border-width: 10px 0; padding-left: 10px; font-size: 29.700px; line-height: 34px; white-space: nowrap; }
  .obj.s { height: 44px; border-width: 8px 0; font-size: 23.700px; line-height: 27px; padding-left: 8px; }
  .obj.xs { height: 40px; border-width: 8px 0; font-size: 19.900px; line-height: 23px; padding-left: 8px; -webkit-text-stroke: 0.3px #fff; }
  .obj.low { top: 1250px; }
  .shake { left: 12px; top: 1294px; width: 130px; }
  .spin { left: 1572px; top: 1294px; width: 120px; }
  .obj.lime { border-color: #a4fb5c; font-weight: 700; font-size: 34.600px; line-height: 40px; }
  .obj.sky { border-color: #55cff9; } .obj.aqua { border-color: #29c5e0; } .obj.cy { border-color: #62dce0; } .obj.red { border-color: #a21f44; }
  .port { position: absolute; top: -10px; width: 17px; height: 9px; border-radius: 0 0 9px 9px; background: #b6b6b6; }
  .s .port { top: -8px; width: 14px; height: 8px; }
  .port.low { top: auto; bottom: -10px; border-radius: 9px 9px 0 0; }
  .s .port.low { top: auto; bottom: -8px; }
  .port.in { background: #2c2c2c; border: 2.500px solid #f3a193; border-top: 0; }
  .port.out { background: #2c2c2c; border: 2.500px solid #d2d25c; border-bottom: 0; }
  .hover .port.in { top: -19px; height: 16px; border-top: 2.500px solid #f3a193; border-radius: 8px; }
  .hover .port.out { bottom: -19px; height: 17px; border-bottom: 2.500px solid #d2d25c; border-radius: 8px; }

  /* main */
  .main { left: 2022px; top: 448px; width: 2754px; height: 846px; box-shadow: 0 0 0 1.500px #111, 0 24px 60px rgba(0, 0, 0, 0.6); }
  .main .bar { background: linear-gradient(#3a3a3a, #303030); border-color: #6a6a6a; border-bottom-color: #111; }
  .main .title { color: #a4a4a4; margin-left: -2px; font-size: 25.600px; }
  .hot i:nth-child(1) { border: 8px solid #fc4d4a; background: #7c0805; } .hot i:nth-child(2) { background: #e2b440; } .hot i:nth-child(3) { background: #54b93a; }
  .mtabs { flex: none; height: 51px; background: #2c2c2c; border-top: 3px solid #4a4a4a; border-bottom: 2px solid #444; display: flex; align-items: center; }
  .mtabs b { width: 180px; height: 100%; background: #424242; color: #41a6e8; font: 700 20.500px/44px Lato, sans-serif; text-align: center; }
  .mtabs span { width: 72px; border-right: 1px solid #444; color: #b5b5b5; font: 700 21px/42px Lato, sans-serif; text-align: center; }
  .cables { position: absolute; inset: 0; width: 2754px; height: 846px; }
  .cables path { fill: none; }
  .cables .o { stroke: #7e7e7e; stroke-width: 6.500; } .cables .i { stroke: #a9a9a9; stroke-width: 3.500; }
  .numbox { position: absolute; width: 126px; height: 56px; background: #2c2c2c; color: #fff; font-size: 29px; line-height: 56px; display: flex; align-items: center; padding-left: 10px; gap: 6px; }
  .numbox i { border: solid transparent; border-width: 15px 0 15px 15px; border-left-color: #767676; }
  .cmt { position: absolute; font-size: 29.800px; white-space: nowrap; color: #1e1e1e; }
  .c1 { left: 480px; top: 592px; line-height: 33.600px; } .c2 { left: 30px; top: 669px; font: 32.500px/39px Lato, sans-serif; }
  .c3 { left: 2356px; top: 253px; line-height: 34px; } .c4 { left: 2356px; top: 442px; line-height: 34px; }
  .entry { position: absolute; left: 2346px; top: 284px; width: 262px; height: 70px; background: #2c2c2c; border: 5px solid #515151; border-radius: 12px; }
  .umenu { position: absolute; left: 2346px; top: 360px; width: 268px; height: 57px; background: linear-gradient(#4a4a4a, #303030); color: #fff; font-size: 29.500px; line-height: 57px; padding: 0 17px 0 15px; display: flex; justify-content: space-between; align-items: center; }
  .umenu i { border: solid transparent; border-width: 13px 11px 0; border-top-color: #fff; }
  .pill { position: absolute; border: 2.500px solid #4a4a4a; border-radius: 26px; background: #999; color: #000; font-size: 23.600px; display: flex; align-items: center; justify-content: center; white-space: nowrap; padding-bottom: 1px; -webkit-text-stroke: 0.3px #000; }

  /* config and battery */
  .config { left: 2600px; top: 46px; width: 888px; height: 420px; background: #505050; }
  .batt { left: 4456px; top: 46px; width: 680px; height: 462px; background: #505050; }
  .batt .bar { justify-content: flex-start; padding-left: 138px; }
  .tools { flex: none; height: 68px; display: flex; align-items: center; padding: 1px 0 0 16px; color: #7c7c7c; }
  .tools b { font: 700 21px/30px Lato, sans-serif; width: 66px; }
  .tri { width: 12px; border: solid transparent; border-width: 10px 6px 0; border-top-color: #767676; margin-right: 51px; }
  .tool { position: relative; width: 32px; height: 32px; margin-right: 26px; }
  .batt .tri { margin-right: 33px; } .batt .tool { margin-right: 22px; }
  .drop::after { content: ""; position: absolute; left: 9px; top: 37px; border: solid transparent; border-width: 7px 7px 0; border-top-color: #767676; }
  .ico { width: 32px; height: 32px; }
  .mm { font: italic 700 19px "Liberation Serif", serif; fill: #767676; stroke: none; }
  .ii { font: italic 700 30px "Liberation Serif", serif; fill: #505050; stroke: none; }
  .gap { margin-left: 34px; } .gap2 { margin-left: 18px; }
  .mid { display: flex; }
  .side { width: 68px; flex: none; display: flex; flex-direction: column; align-items: center; gap: 30px; padding-top: 19px; }
  .canvas { position: relative; width: 752px; height: 272px; background: #e0e0e0; }
  .wires { position: absolute; inset: 0; width: 752px; height: 272px; }
  .wires path { stroke: #8a8a8a; stroke-width: 5; }
  .levels { width: 512px; height: 282px; background: #fff; padding-top: 30px; display: flex; flex-direction: column; gap: 20px; }
  .level { display: flex; height: 40px; line-height: 40px; font-size: 23.800px; padding-left: 38px; color: #1c1c1c; }
  .level b { width: 22px; }
  .pc { width: 128px; background: #c8fbc8; padding: 0 9px 0 8px; display: flex; justify-content: space-between; }
  .rem { width: 270px; margin-left: 22px; background: #c8fbc8; padding-left: 8px; display: flex; }
  .rem span { width: 90px; }
  .dock { display: flex; gap: 28px; padding: 18px 0 0 314px; }

  /* trigger */
  .trig { width: 269px; height: 224px; background: #c3c3c3; }
  .trig .bar { justify-content: flex-start; padding-left: 138px; }
  .tb { display: flex; flex-direction: column; white-space: nowrap; font-size: 19.700px; }
  .tb strong { padding: 6px 0 0 29px; line-height: 22px; }
  .tr { display: flex; flex: none; }
  .t1 { height: 30px; line-height: 32px; } .t1 em { width: 59px; background: linear-gradient(90deg, #5c5c5c, #777); color: #c8e3e6; font: 24px/30px "DejaVu Sans", sans-serif; text-align: center; }
  .t1 span { width: 90px; } .t1 em + span { margin-left: 48px; }
  .tr label { width: 99px; padding-left: 9px; }
  .t2 { height: 40px; line-height: 34px; margin-top: -2px; } .t2 .v { width: 85px; height: 42px; line-height: 42px; padding-left: 8px; background: #bcbcc0; color: #111; font-family: "DejaVu Sans", sans-serif; } .t2 .v2 { margin-left: 4.500px; width: 79px; }
  .t3 { height: 34px; line-height: 37px; } .tr b { width: 72px; height: 39px; line-height: 39px; padding-left: 8px; background: #a0a0a0; color: #000; }
  .t4 { line-height: 37px; } .t4 label { width: 171px; }

  /* finder */
  .finder { position: absolute; left: 425px; top: 1340px; width: 300px; height: 719px; background: #242424; border: 2px solid #4a4a4a; border-radius: 0 0 0 10px; padding: 30px 0 0 15px; color: #6f6f6f; font: 26px/52px Inter, sans-serif; }
  .fi { height: 52px; display: flex; align-items: center; padding-left: 18px; }
  .fi svg { width: 36px; height: 32px; margin-right: 9px; }
  .fi i { width: 24px; height: 24px; border-radius: 50%; margin: 0 15px 0 6px; flex: none; }
  .fi:nth-child(2) { margin-top: -4px; }
  h4 { font: 600 22.500px/30px Inter, sans-serif; color: #868686; margin: 25px 0 2px; white-space: nowrap; }
  .tg { margin: 23px 0 5px; }

  /* background windows */
  .vz { position: absolute; left: 1850px; top: 896px; width: 402px; height: 500px; overflow: hidden; background: #151515; }
  .vz-a { height: 50px; background: #2a2a2a; border-top: 2px solid #555; } .vz-b { height: 45px; background: #343434; border-top: 1px solid #484848; } .vz-c { height: 15px; background: #262626; border-bottom: 2px solid #000; }
  .vz svg { position: absolute; left: 0; top: -16px; width: 402px; height: 530px; }
  .prefs { position: absolute; left: 2500px; top: 1200px; width: 1336px; height: 947px; background: #202020; border: 2px solid #3c3c3c; border-radius: 0 0 10px 10px; padding: 0 38px; }
  .panel { height: 300px; border: 1px solid #333; border-top: 0; background: #222; padding: 76px 0 0 173px; color: #808080; font: 25.300px/46px Inter, sans-serif; white-space: nowrap; }
  .pl { display: flex; align-items: center; height: 46px; }
  .pl i { width: 28px; height: 28px; border-radius: 6px; background: #3a3a3a; margin-right: 9px; }
  .pl span { letter-spacing: -0.100px; }
  .w1 { width: 229px; } .w2 { width: 535px; }
  .pl em { width: 208px; height: 36px; margin-right: 18px; padding: 0 10px 0 16px; background: #2f2f2f; border-radius: 6px; line-height: 36px; color: #4c4c4c; display: flex; justify-content: space-between; }
  .dim { color: #575757; } .pl .btn { width: 294px; padding-left: 26px; background: #333; color: #606060; }

  /* desktop */
  .zfile { position: absolute; left: 4703px; top: 543px; width: 170px; display: flex; flex-direction: column; color: #ddd; font: 600 25px/30px Inter, sans-serif; }
  .zfile svg { width: 90px; height: 90px; } .zfile span { margin: 20px 0 0 76px; }
  .file { position: absolute; left: 4870px; width: 238px; display: flex; flex-direction: column; align-items: center; color: #fff; font: 600 24.600px/32px Inter, sans-serif; white-space: nowrap; }
  .file svg { width: 122px; }
  .file figcaption { display: flex; flex-direction: column; align-items: center; }
  .txt { font: 15px "Liberation Sans", sans-serif; fill: #666; letter-spacing: 1px; }
</style>
